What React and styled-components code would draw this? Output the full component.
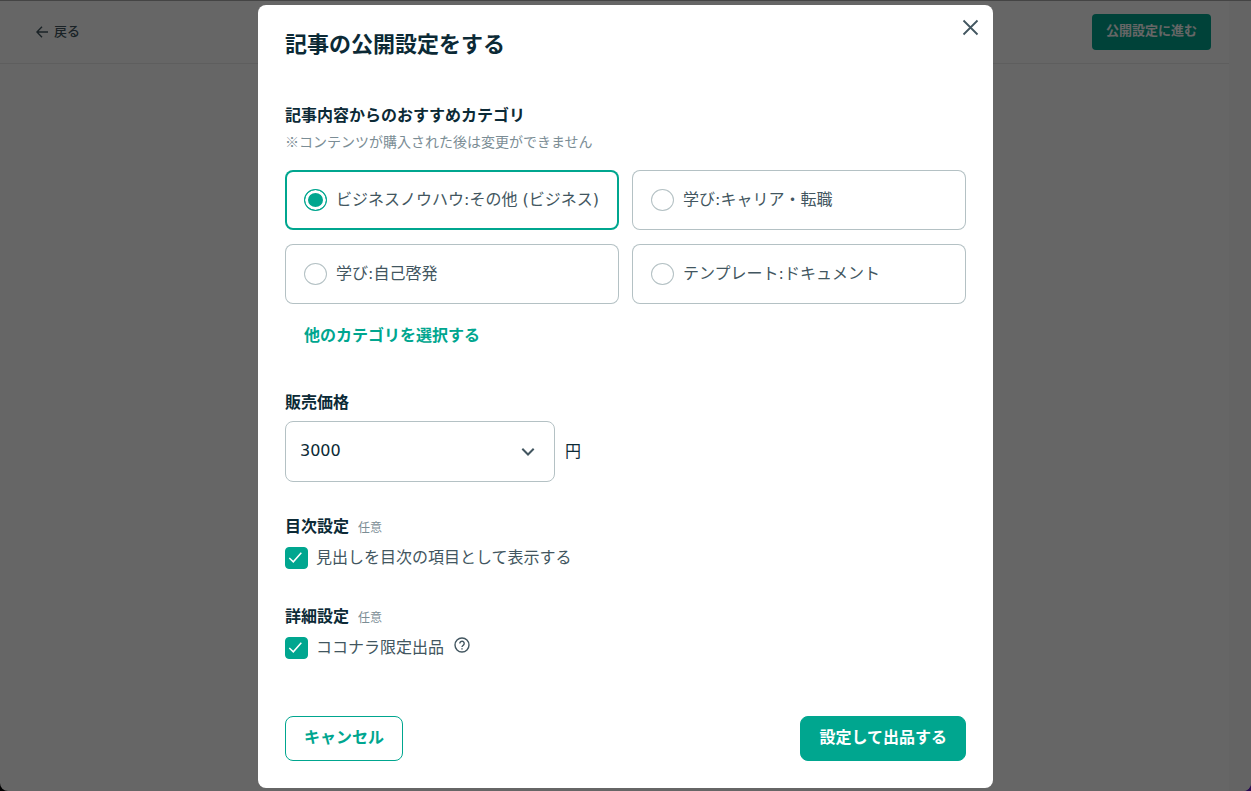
import { useState } from "react";
import styled, { createGlobalStyle } from "styled-components";

const GlobalStyle = createGlobalStyle`
  * {
    box-sizing: border-box;
  }
  body {
    margin: 0;
    background: linear-gradient(90deg, #000 50%, #6a1fd0 50%);
    color: #0c2a36;
    font-family: "DejaVu Sans", "Noto Sans CJK JP", sans-serif;
    font-size: 16px;
    line-height: 24px;
  }
  button, select, input {
    font: inherit;
  }
`;

const Page = styled.div`
  display: flex;
  min-height: 100vh;
  background: #fff;
  border-top: 1px solid #aaa;
  border-radius: 0 0 8px 8px;
`;
const Main = styled.div`
  flex: 1;
`;
const ScrollTrack = styled.div`
  width: 22px;
  background: #fafafa;
  border-radius: 0 0 8px 0;
`;
const Header = styled.header`
  display: flex;
  align-items: center;
  justify-content: space-between;
  height: 63px;
  padding: 0 18px 0 36px;
  border-bottom: 1px solid #ebebeb;
  font-size: 13px;
`;
const Back = styled.a`
  display: flex;
  align-items: center;
  gap: 6px;
  color: #425660;
  font-weight: 500;
  text-decoration: none;
`;
const ProceedButton = styled.button`
  height: 36px;
  padding: 0 14px 2px;
  border: 0;
  border-radius: 4px;
  background: #00a68f;
  color: #fff;
  font-weight: 700;
`;

const Overlay = styled.div`
  position: fixed;
  inset: 0;
  display: flex;
  align-items: flex-start;
  justify-content: center;
  padding: 5px 0 3px;
  overflow: auto;
  background: rgba(0, 0, 0, 0.6);
`;
const Modal = styled.div`
  position: relative;
  width: 100%;
  max-width: 735px;
  padding: 27px;
  border-radius: 8px;
  background: #fff;
`;
const CloseButton = styled.button`
  position: absolute;
  top: 14px;
  right: 14px;
  display: flex;
  padding: 0;
  border: 0;
  background: none;
  color: #425660;
`;
const Title = styled.h1`
  margin: 0 0 46px;
  font-size: 22px;
  line-height: 26px;
`;
const Section = styled.section`
  margin-bottom: ${(props) => props.$gap}px;
`;
const Heading = styled.h2`
  display: flex;
  align-items: center;
  gap: 9px;
  margin: 0;
  font-size: 16px;
  font-weight: 700;
  line-height: 24px;
`;
const Optional = styled.span`
  padding-top: 2px;
  color: #7b8d95;
  font-size: 12px;
  font-weight: 400;
`;
const Note = styled.p`
  margin: 1px 0 17px;
  color: #7b8d95;
  font-family: "Noto Sans CJK JP", sans-serif;
  font-size: 14px;
`;

const CategoryGrid = styled.div`
  display: grid;
  grid-template-columns: 1fr 1fr;
  gap: 14px 13px;
  margin-bottom: 20px;
`;
const Category = styled.label`
  display: flex;
  align-items: center;
  gap: 9px;
  height: 60px;
  padding: 0 16px 0 19px;
  border-radius: 8px;
  box-shadow: inset 0 0 0 ${(props) => (props.$checked ? "2px #00a68f" : "1px #b4c1c4")};
  color: #425660;
  white-space: nowrap;
`;
const Radio = styled.input`
  appearance: none;
  flex-shrink: 0;
  width: 23px;
  height: 22px;
  margin: 0;
  border: 1px solid #b4c1c4;
  border-radius: 50%;
  &:checked {
    border-color: #00a68f;
    background: #00a68f;
    box-shadow: inset 0 0 0 3px #fff;
  }
`;
const OtherLink = styled.a`
  margin-left: 19px;
  color: #00a68f;
  font-weight: 700;
  text-decoration: none;
`;

const PriceRow = styled.div`
  display: flex;
  align-items: center;
  gap: 10px;
  margin-top: 6px;
`;
const SelectBox = styled.div`
  position: relative;
  width: 270px;
`;
const Select = styled.select`
  appearance: none;
  display: block;
  width: 100%;
  height: 61px;
  padding: 0 48px 2px 14px;
  border: 1px solid #b4c1c4;
  border-radius: 8px;
  background: #fff;
  color: #0c2a36;
`;
const Chevron = styled.svg`
  position: absolute;
  top: 26px;
  right: 20px;
  pointer-events: none;
`;

const CheckRow = styled.div`
  display: flex;
  align-items: center;
  gap: 10px;
  margin-top: 6px;
`;
const CheckLabel = styled.label`
  display: flex;
  align-items: center;
  gap: 8px;
  color: #425660;
`;
const CheckBox = styled.span`
  position: relative;
  display: flex;
  width: 23px;
  height: 22px;
  svg {
    position: absolute;
    inset: 0;
    pointer-events: none;
  }
`;
const CheckInput = styled.input`
  appearance: none;
  width: 100%;
  height: 100%;
  margin: 0;
  border: 1px solid #b4c1c4;
  border-radius: 4px;
  &:checked {
    border-color: #00a68f;
    background: #00a68f;
  }
`;
const HelpButton = styled.button`
  display: flex;
  padding: 0 0 6px;
  border: 0;
  background: none;
  color: #425660;
`;

const Footer = styled.div`
  display: flex;
  justify-content: space-between;
`;
const Button = styled.button`
  height: 45px;
  padding: 0 18px 2px;
  border: 1px solid #00a68f;
  border-radius: 8px;
  background: ${(props) => (props.$primary ? "#00a68f" : "#fff")};
  color: ${(props) => (props.$primary ? "#fff" : "#00a68f")};
  font-weight: 700;
`;

const categories = [
  "ビジネスノウハウ:その他 (ビジネス)",
  "学び:キャリア・転職",
  "学び:自己啓発",
  "テンプレート:ドキュメント",
];

function Check({ label, children }) {
  const [checked, setChecked] = useState(true);
  return (
    <CheckRow>
      <CheckLabel>
        <CheckBox>
          <CheckInput
            type="checkbox"
            checked={checked}
            onChange={(e) => setChecked(e.target.checked)}
          />
          <svg width="23" height="22" viewBox="0 0 23 22" fill="none">
            <path d="M4.3 11l4 3.8 8-9" stroke="#fff" strokeWidth="1.5" />
          </svg>
        </CheckBox>
        {label}
      </CheckLabel>
      {children}
    </CheckRow>
  );
}

export default function App() {
  const [category, setCategory] = useState(categories[0]);
  const [price, setPrice] = useState("3000");

  return (
    <>
      <GlobalStyle />
      <Page>
        <Main>
          <Header>
            <Back href="#">
              <svg width="12" height="12" viewBox="0 0 12 12" fill="none">
                <path
                  d="M12 6H1M6 .7L.9 6 6 11.3"
                  stroke="currentColor"
                  strokeWidth="1.4"
                />
              </svg>
              戻る
            </Back>
            <ProceedButton>公開設定に進む</ProceedButton>
          </Header>
        </Main>
        <ScrollTrack />
      </Page>

      <Overlay>
        <Modal role="dialog" aria-labelledby="modal-title">
          <CloseButton aria-label="閉じる">
            <svg width="17" height="17" viewBox="0 0 17 17" fill="none">
              <path
                d="M1.5 1.5l14 14M15.5 1.5l-14 14"
                stroke="currentColor"
                strokeWidth="1.8"
              />
            </svg>
          </CloseButton>
          <Title id="modal-title">記事の公開設定をする</Title>

          <Section $gap={43}>
            <Heading>記事内容からのおすすめカテゴリ</Heading>
            <Note>※コンテンツが購入された後は変更ができません</Note>
            <CategoryGrid>
              {categories.map((name) => (
                <Category key={name} $checked={name === category}>
                  <Radio
                    type="radio"
                    name="category"
                    checked={name === category}
                    onChange={() => setCategory(name)}
                  />
                  {name}
                </Category>
              ))}
            </CategoryGrid>
            <OtherLink href="#">他のカテゴリを選択する</OtherLink>
          </Section>

          <Section $gap={32}>
            <Heading as="label" htmlFor="price">
              販売価格
            </Heading>
            <PriceRow>
              <SelectBox>
                <Select
                  id="price"
                  value={price}
                  onChange={(e) => setPrice(e.target.value)}
                >
                  <option>1000</option>
                  <option>2000</option>
                  <option>3000</option>
                </Select>
                <Chevron width="14" height="10" viewBox="0 0 14 10" fill="none">
                  <path d="M1.3 1.8L7 7.5l5.7-5.7" stroke="#425660" strokeWidth="2" />
                </Chevron>
              </SelectBox>
              円
            </PriceRow>
          </Section>

          <Section $gap={34}>
            <Heading>
              目次設定 <Optional>任意</Optional>
            </Heading>
            <Check label="見出しを目次の項目として表示する" />
          </Section>

          <Section $gap={56}>
            <Heading>
              詳細設定 <Optional>任意</Optional>
            </Heading>
            <Check label="ココナラ限定出品">
              <HelpButton aria-label="ヘルプ">
                <svg width="16" height="16" viewBox="0 0 16 16" fill="none">
                  <circle cx="8" cy="8" r="7" stroke="currentColor" strokeWidth="1.4" />
                  <path
                    d="M5.8 6.4a2.2 2.2 0 1 1 3.6 1.7C8.5 8.8 8 9.1 8 10M8 11.2v1.4"
                    stroke="currentColor"
                    strokeWidth="1.4"
                  />
                </svg>
              </HelpButton>
            </Check>
          </Section>

          <Footer>
            <Button>キャンセル</Button>
            <Button $primary>設定して出品する</Button>
          </Footer>
        </Modal>
      </Overlay>
    </>
  );
}
